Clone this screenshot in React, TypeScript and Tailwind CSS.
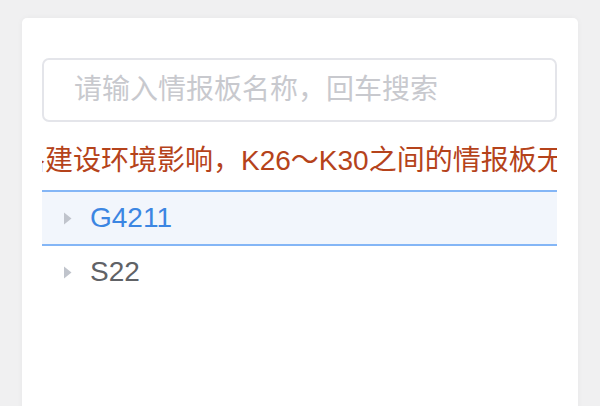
import React from "react";

const font = { fontFamily: '"Liberation Sans", "Noto Sans CJK SC", sans-serif' };

function Caret() {
  return (
    <svg width="9" height="13" viewBox="0 0 9 13" className="shrink-0">
      <path d="M1 0.5 L8.5 6.5 L1 12.5 Z" fill="#c0c4cc" />
    </svg>
  );
}

export default function App() {
  return (
    <div className="w-[600px] h-[406px] bg-[#f0f0f1] overflow-hidden pt-[18px] px-[22px]" style={font}>
      <div className="bg-white rounded-[5px] h-[400px] pt-[40px] pl-[20px] pr-[21px] shadow-[0_0_6px_rgba(0,0,0,0.04)]">
        <div className="h-[64px] border-2 border-[#e4e5ea] rounded-[7px] flex items-center pl-[30px] text-[28px] text-[#c8c9ce]">
          请输入情报板名称，回车搜索
        </div>
        <div className="overflow-hidden mt-[14px] h-[50px] flex items-center">
          <div className="whitespace-nowrap text-[28px] text-[#b5431b] ml-[-25px]">
            路建设环境影响，K26～K30之间的情报板无法正常显示
          </div>
        </div>
        <div className="mt-[4px]">
          <div className="h-[56px] bg-[#f2f6fc] border-y-2 border-[#84b6f6] flex items-center pl-[21px] gap-[18px]">
            <Caret />
            <span className="text-[28px] text-[#3c86e2]">G4211</span>
          </div>
          <div className="h-[52px] flex items-center pl-[21px] gap-[18px]">
            <Caret />
            <span className="text-[28px] text-[#606266]">S22</span>
          </div>
        </div>
      </div>
    </div>
  );
}
